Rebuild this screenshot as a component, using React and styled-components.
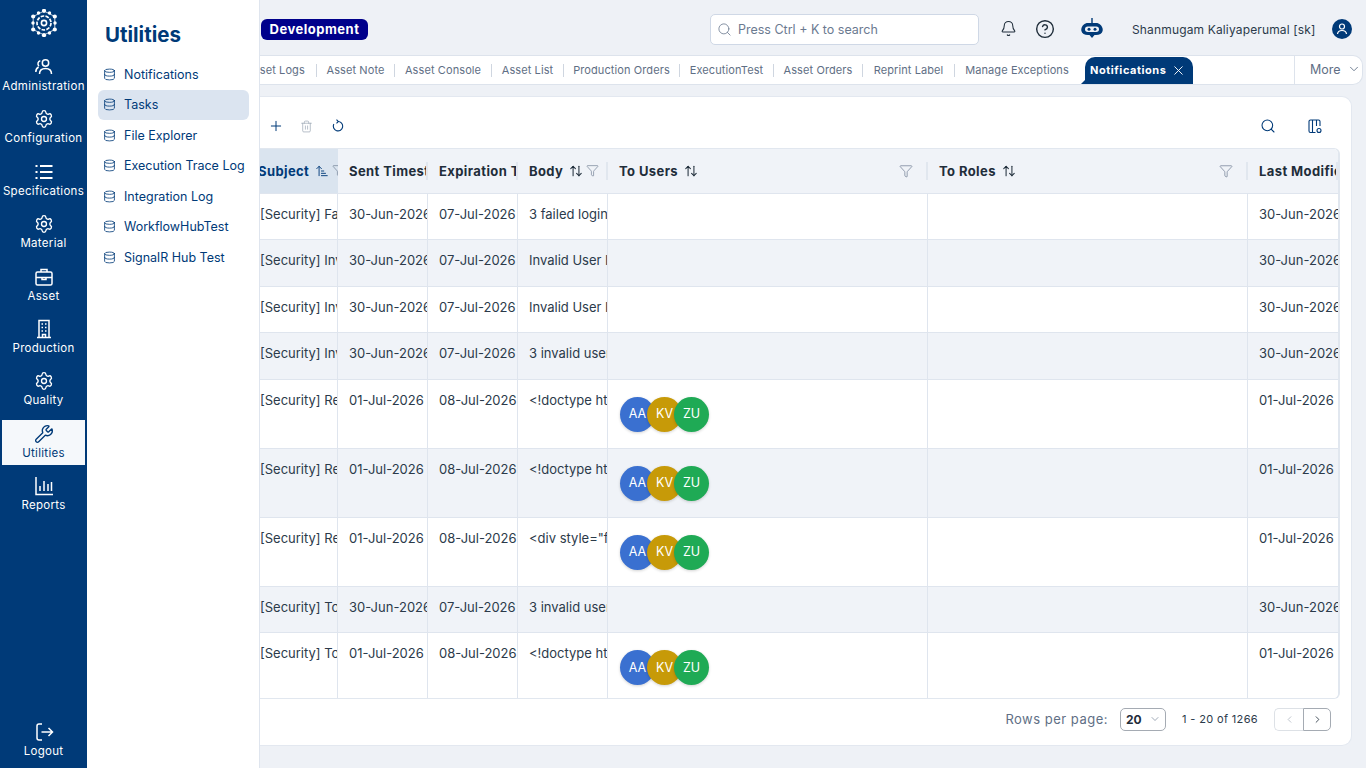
import React from "react";
import styled, { createGlobalStyle } from "styled-components";
import {
  Settings,
  Wrench,
  Database,
  Search,
  Bell,
  CircleHelp,
  X,
  ChevronDown,
  ChevronLeft,
  ChevronRight,
  Plus,
  Trash2,
  ArrowUpDown,
  ArrowUpNarrowWide,
  Funnel,
} from "lucide-react";

const NAVY = "#003a78";

const GlobalStyle = createGlobalStyle`
  html, body {
    margin: 0;
    height: 100%;
    overflow: hidden;
  }
  body {
    font-family: Inter, "Open Sans", sans-serif;
    background-color: #eef1f6;
  }
  * {
    box-sizing: border-box;
  }
`;

const Page = styled.div`
  display: flex;
  width: 1366px;
  height: 768px;
  overflow: hidden;
`;

const Rail = styled.nav`
  width: 87px;
  flex-shrink: 0;
  display: flex;
  flex-direction: column;
  background-color: ${NAVY};
  padding: 0 2px 5px;
`;

const LogoBox = styled.div`
  height: 53px;
  flex-shrink: 0;
  display: flex;
  justify-content: center;
  padding-top: 9px;
`;

const RailList = styled.div`
  flex: 1;
  display: flex;
  flex-direction: column;
  gap: 7.4px;
`;

const RailItem = styled.div`
  height: 45px;
  display: flex;
  flex-direction: column;
  align-items: center;
  padding-top: 4px;
  gap: 2px;
  font-size: 11.5px;
  line-height: 14px;
  letter-spacing: 0.3px;
  white-space: nowrap;
  color: ${(p) => (p.$active ? NAVY : "#ffffff")};
  background-color: ${(p) => (p.$active ? "#f5f8fb" : "transparent")};
`;

const Flyout = styled.aside`
  width: 173px;
  flex-shrink: 0;
  background-color: #ffffff;
  border-right: 1px solid #dfe5ee;
  padding: 0 10px 0 11px;
`;

const FlyoutTitle = styled.h2`
  margin: 0;
  height: 59px;
  padding: 22px 0 0 7px;
  font-size: 20.5px;
  line-height: 26px;
  font-weight: 700;
  color: ${NAVY};
`;

const MenuList = styled.div`
  display: flex;
  flex-direction: column;
  gap: 0.6px;
`;

const MenuItem = styled.div`
  height: 30px;
  display: flex;
  align-items: center;
  gap: 8px;
  padding-left: 5px;
  border-radius: 6px;
  font-size: 12.5px;
  white-space: nowrap;
  color: ${NAVY};
  background-color: ${(p) => (p.$active ? "#dbe4f0" : "transparent")};

  svg {
    flex-shrink: 0;
  }
`;

const Main = styled.main`
  flex: 1;
  min-width: 0;
  display: flex;
  flex-direction: column;
  overflow: hidden;
`;

const TopBar = styled.header`
  height: 55px;
  flex-shrink: 0;
  display: flex;
  align-items: center;
  padding: 3px 14px 0 1px;
`;

const EnvBadge = styled.div`
  width: 107px;
  height: 21px;
  display: flex;
  align-items: center;
  justify-content: center;
  border-radius: 6px;
  background-color: #00008b;
  color: #ffffff;
  font-size: 13px;
  font-weight: 700;
  letter-spacing: 0.5px;
`;

const SearchBox = styled.div`
  width: 269px;
  height: 31px;
  margin-left: 342px;
  display: flex;
  align-items: center;
  gap: 6px;
  padding-left: 6px;
  background-color: #ffffff;
  border: 1px solid #cfd8e6;
  border-radius: 5px;
  font-size: 12.5px;
  color: #6b7a90;

  svg {
    flex-shrink: 0;
  }
`;

const TopIcon = styled.div`
  display: flex;
  margin-left: ${(p) => p.$gap}px;
  margin-top: -1px;
  color: ${(p) => p.$color || "#1f2d3a"};
`;

const UserName = styled.div`
  margin-left: ${(p) => p.$gap}px;
  width: 200px;
  font-size: 12px;
  letter-spacing: 0.15px;
  white-space: nowrap;
  color: #2b3a4a;
`;

const TabBar = styled.div`
  height: 30px;
  flex-shrink: 0;
  margin-right: 3px;
  display: flex;
  background-color: #ffffff;
  border: 1px solid #dde3ec;
  border-left: none;
  border-radius: 0 10px 10px 0;
  overflow: hidden;
`;

const TabStrip = styled.div`
  flex: 1;
  min-width: 0;
  display: flex;
  align-items: center;
  margin-left: -25px;
`;

const Tab = styled.div`
  flex-shrink: 0;
  width: ${(p) => p.$width}px;
  height: 13px;
  display: flex;
  align-items: center;
  justify-content: center;
  font-size: 11px;
  letter-spacing: 0.1px;
  white-space: nowrap;
  color: #5f6f85;
  border-right: ${(p) => (p.$last ? "none" : "1px solid #cfd6e0")};
`;

const ActiveTab = styled.div`
  position: relative;
  flex-shrink: 0;
  width: 108px;
  height: 28px;
  margin: 0 0 -1px 6px;
  padding: 0 0 2px 5px;
  align-self: flex-end;
  display: flex;
  align-items: center;
  gap: 5px;
  background-color: ${NAVY};
  border-radius: 10px 10px 0 0;
  color: #ffffff;
  font-size: 11px;
  font-weight: 700;
  letter-spacing: 0.55px;

  &::before {
    content: "";
    position: absolute;
    left: -5px;
    bottom: 0;
    border-bottom: 5px solid ${NAVY};
    border-left: 5px solid transparent;
  }
`;

const MoreBox = styled.div`
  width: 68px;
  flex-shrink: 0;
  display: flex;
  align-items: center;
  gap: 6px;
  padding: 0 0 2px 15px;
  border-left: 1px solid #dde3ec;
  font-size: 12.5px;
  color: #5f6f85;
`;

const Card = styled.section`
  height: 650px;
  margin: 11px 14px 0 0;
  display: flex;
  flex-direction: column;
  background-color: #ffffff;
  border: 1px solid #e3e8f0;
  border-left: none;
  border-radius: 0 10px 10px 0;
  overflow: hidden;
`;

const Toolbar = styled.div`
  height: 50.5px;
  flex-shrink: 0;
  display: flex;
  align-items: center;
  padding: 8px 13px 0 0;
`;

const ToolButton = styled.button`
  width: ${(p) => p.$width || 31}px;
  display: flex;
  justify-content: center;
  padding: 0;
  background: none;
  border: none;
  color: ${(p) => p.$color || NAVY};
`;

const Spacer = styled.div`
  flex: 1;
`;

const TableWrap = styled.div`
  height: 551px;
  flex-shrink: 0;
  margin-right: 11px;
  border: 1px solid #e1e7ef;
  border-width: 1px 2px 1px 0;
  border-radius: 0 6px 6px 0;
  overflow: hidden;
`;

const HeadRow = styled.div`
  display: grid;
  grid-template-columns: 78px 90px 90px 90px 320px 320px 90px;
  height: 45px;
  background-color: #f0f3f8;
  border-bottom: 1px solid #dfe5ee;
`;

const HeadCell = styled.div`
  position: relative;
  display: flex;
  align-items: center;
  gap: 6px;
  min-width: 0;
  padding-left: ${(p) => (p.$first ? "0" : "11px")};
  overflow: hidden;
  white-space: nowrap;
  font-size: 13px;
  font-weight: 700;
  letter-spacing: 0.4px;
  color: ${(p) => (p.$sorted ? NAVY : "#1f2d3a")};
  background-color: ${(p) => (p.$sorted ? "#dae4ef" : "transparent")};

  svg {
    flex-shrink: 0;
  }

  &::after {
    content: "";
    display: ${(p) => (p.$sorted ? "none" : "block")};
    position: absolute;
    right: 0;
    top: 13px;
    width: 2px;
    height: 18px;
    background-color: #e1e7ef;
  }
`;

const HeadLabel = styled.span`
  flex-shrink: 0;
  margin-left: ${(p) => (p.$pull ? "-2px" : "0")};
`;

const FilterSlot = styled.span`
  display: flex;
  flex-shrink: 0;
  margin-left: ${(p) => (p.$push ? "auto" : "-3px")};
  margin-right: ${(p) => (p.$push ? "15px" : "0")};
  color: #6b7a90;
`;

const Row = styled.div`
  display: grid;
  grid-template-columns: 78px 90px 90px 90px 320px 320px 90px;
  height: ${(p) => (p.$tall ? "69px" : "46.5px")};
  background-color: ${(p) => (p.$shaded ? "#f0f3f8" : "#ffffff")};
  border-bottom: 1px solid #dfe5ee;
`;

const Cell = styled.div`
  min-width: 0;
  padding: 12px 0 0 ${(p) => (p.$first ? "0" : "11px")};
  overflow: hidden;
  white-space: nowrap;
  font-size: 13px;
  line-height: 16px;
  color: #2b3a4a;
  border-right: ${(p) => (p.$last ? "none" : "1px solid #dfe5ee")};
`;

const AvatarGroup = styled.div`
  display: flex;
  padding: 5px 0 0 1px;
`;

const Avatar = styled.div`
  width: 35px;
  height: 35px;
  margin-left: -8px;
  display: flex;
  align-items: center;
  justify-content: center;
  border-radius: 50%;
  background-color: ${(p) => p.$color};
  box-shadow: 0 1px 3px rgba(0, 0, 0, 0.18);
  color: #ffffff;
  font-size: 12.5px;

  &:first-child {
    margin-left: 0;
  }
`;

const Pagination = styled.div`
  flex: 1;
  display: flex;
  align-items: center;
  padding: 0 20px 5px 0;
  justify-content: flex-end;
`;

const RowsLabel = styled.span`
  font-size: 13px;
  letter-spacing: 0.5px;
  color: #5f6f85;
  margin-right: 12px;
`;

const PageSelect = styled.div`
  width: 46px;
  height: 23px;
  display: flex;
  align-items: center;
  justify-content: space-between;
  padding: 0 4px 0 5px;
  border: 1px solid #a5abb3;
  border-radius: 5px;
  font-size: 12px;
  font-weight: 700;
  color: #1f2d3a;
`;

const PageRange = styled.span`
  margin: 0 16px;
  font-size: 11px;
  letter-spacing: 0.35px;
  color: #2b3a4a;
`;

const PageButton = styled.button`
  width: ${(p) => p.$width}px;
  height: 23px;
  display: flex;
  align-items: center;
  justify-content: center;
  padding: 0;
  background: #ffffff;
  border: 1px solid ${(p) => (p.$off ? "#dde1e6" : "#a5abb3")};
  border-radius: ${(p) => (p.$off ? "5px 0 0 5px" : "0 5px 5px 0")};
  border-right-width: ${(p) => (p.$off ? "0" : "1px")};
  color: ${(p) => (p.$off ? "#a8b0bb" : "#1f2d3a")};
`;

function LogoMark() {
  const ring = [
    [14, 1.8], [19.5, 4], [24.8, 7.5], [25, 14], [24.8, 20.5], [19.5, 24],
    [14, 26.2], [8.5, 24], [3.2, 20.5], [3, 14], [3.2, 7.5], [8.5, 4],
  ];
  return (
    <svg width="28" height="28" viewBox="0 0 28 28" fill="none">
      <path d="M14 2L24.800 7.500V20.500L14 26L3.200 20.500V7.500Z" stroke="#fff" strokeWidth="0.8" />
      {ring.map(([x, y], i) => (
        <circle key={i} cx={x} cy={y} r={i % 2 ? 1.7 : 2.1} fill="#fff" />
      ))}
      <circle cx="14" cy="14" r="7" fill={NAVY} stroke="#fff" strokeWidth="1.700" strokeDasharray="3.600 1.300" />
      <circle cx="14" cy="14" r="2.600" stroke="#fff" strokeWidth="1.600" />
    </svg>
  );
}

function RailSvg({ children }) {
  return (
    <svg width="20" height="20" viewBox="0 0 20 20" fill="none" stroke="currentColor" strokeWidth="1.500">
      {children}
    </svg>
  );
}

function AdminIcon() {
  return (
    <RailSvg>
      <circle cx="11.500" cy="6" r="3.200" />
      <path d="M5.500 17c0-3.500 2.500-5.500 6-5.500s6 2 6 5.500" />
      <path d="M6.300 3.800a3 3 0 0 0-1.300 5.200M1.800 15c0-2.500 1-4 2.800-5" />
    </RailSvg>
  );
}

function ListIcon() {
  return (
    <RailSvg>
      <path strokeWidth="1.900" d="M1.500 4h2M6 4h12.500M1.500 10h2M6 10h12.500M1.500 16h2M6 16h12.500" />
    </RailSvg>
  );
}

function BriefcaseIcon() {
  return (
    <RailSvg>
      <rect x="2" y="5" width="16" height="13" rx="1.500" />
      <path d="M7 5V2.500h6V5M2 10.500h16M8 10.500v2h4v-2" />
    </RailSvg>
  );
}

function BuildingIcon() {
  return (
    <RailSvg>
      <path d="M5 18.500V1.500h10v17M3 18.500h14" />
      <path strokeWidth="1.700" d="M7.500 5h1.500M11 5h1.500M7.500 8.500h1.500M11 8.500h1.500M7.500 12h1.500M11 12h1.500" />
      <path d="M8.500 18.500v-3h3v3" />
    </RailSvg>
  );
}

function ReportsIcon() {
  return (
    <RailSvg>
      <path d="M2 1v17.500h17" />
      <path d="M6 15v-5M10 15V5M14 15V8M17.500 15V6" />
    </RailSvg>
  );
}

function LogoutIcon() {
  return (
    <RailSvg>
      <path d="M8 2H5a2 2 0 0 0-2 2v12a2 2 0 0 0 2 2h3M7.500 10H18.500M14.500 6l4 4-4 4" />
    </RailSvg>
  );
}

function BotIcon() {
  return (
    <svg width="22" height="22" viewBox="0 0 22 22">
      <path d="M11 0v5" stroke={NAVY} strokeWidth="1.400" />
      <path
        d="M7 5h8c3.500 0 6 2.500 6.600 5.500.2 1 .2 1.600 0 2.500C21 15.500 18.500 17 15 17h-1.500L11 20l-2.500-3H7c-3.500 0-6-1.500-6.600-4-.2-.9-.2-1.500 0-2.500C1 7.500 3.500 5 7 5z"
        fill={NAVY}
      />
      <rect x="4" y="8.500" width="14" height="5.500" rx="2.750" fill="#eef1f6" />
      <circle cx="8" cy="11.200" r="1.500" fill={NAVY} />
      <circle cx="14" cy="11.200" r="1.500" fill={NAVY} />
    </svg>
  );
}

function UserBadge() {
  return (
    <svg width="20" height="20" viewBox="0 0 20 20" fill="none">
      <circle cx="10" cy="10" r="10" fill={NAVY} />
      <circle cx="10" cy="7.500" r="2.500" stroke="#fff" strokeWidth="1.200" />
      <path d="M5.500 15c.3-2.500 2-3.500 4.500-3.500s4.200 1 4.500 3.500" stroke="#fff" strokeWidth="1.200" />
    </svg>
  );
}

function ColumnsIcon() {
  return (
    <svg width="14" height="15" viewBox="0 0 14 15" fill="none" stroke={NAVY} strokeWidth="1.100">
      <path d="M7.500 13.500H2.500a1.500 1.500 0 0 1-1.500-1.500V2.500A1.500 1.500 0 0 1 2.500 1h8A1.500 1.500 0 0 1 12 2.500V7" />
      <path d="M4.500 1v12.500M8.500 1v6" />
      <circle cx="11" cy="11.500" r="2" />
    </svg>
  );
}

function RefreshIcon() {
  return (
    <svg width="14" height="14" viewBox="0 0 14 14" fill="none" stroke="currentColor" strokeWidth="1.100">
      <path d="M7 2.500a4.700 4.700 0 1 1-4.200 2.600" />
      <path d="M5.500 .7L7.300 2.500 5.500 4.300" />
    </svg>
  );
}

const railItems = [
  { label: "Administration", icon: <AdminIcon /> },
  { label: "Configuration", icon: <Settings size={20} strokeWidth={1.6} /> },
  { label: "Specifications", icon: <ListIcon /> },
  { label: "Material", icon: <Settings size={20} strokeWidth={1.6} /> },
  { label: "Asset", icon: <BriefcaseIcon /> },
  { label: "Production", icon: <BuildingIcon /> },
  { label: "Quality", icon: <Settings size={20} strokeWidth={1.6} /> },
  { label: "Utilities", icon: <Wrench size={20} strokeWidth={1.6} />, active: true },
  { label: "Reports", icon: <ReportsIcon /> },
];

const menuItems = [
  "Notifications",
  "Tasks",
  "File Explorer",
  "Execution Trace Log",
  "Integration Log",
  "WorkflowHubTest",
  "SignalR Hub Test",
];

const tabs = [
  { label: "Asset Logs", width: 82 },
  { label: "Asset Note", width: 78 },
  { label: "Asset Console", width: 97 },
  { label: "Asset List", width: 72 },
  { label: "Production Orders", width: 116 },
  { label: "ExecutionTest", width: 94 },
  { label: "Asset Orders", width: 89 },
  { label: "Reprint Label", width: 92 },
  { label: "Manage Exceptions", width: 124, last: true },
];

const users = [
  { initials: "AA", color: "#3a70d0" },
  { initials: "KV", color: "#c79a08" },
  { initials: "ZU", color: "#1faa55" },
];

const rows = [
  { subject: "[Security] Failed Login", sent: "30-Jun-2026", exp: "07-Jul-2026", body: "3 failed login attempts" },
  { subject: "[Security] Invalid User", sent: "30-Jun-2026", exp: "07-Jul-2026", body: "Invalid User Id" },
  { subject: "[Security] Invalid User", sent: "30-Jun-2026", exp: "07-Jul-2026", body: "Invalid User Id" },
  { subject: "[Security] Invalid User", sent: "30-Jun-2026", exp: "07-Jul-2026", body: "3 invalid user attempts" },
  { subject: "[Security] Reset", sent: "01-Jul-2026", exp: "08-Jul-2026", body: "<!doctype html>", avatars: true },
  { subject: "[Security] Reset", sent: "01-Jul-2026", exp: "08-Jul-2026", body: "<!doctype html>", avatars: true },
  { subject: "[Security] Reset", sent: "01-Jul-2026", exp: "08-Jul-2026", body: '<div style="font', avatars: true },
  { subject: "[Security] Token", sent: "30-Jun-2026", exp: "07-Jul-2026", body: "3 invalid user attempts" },
  { subject: "[Security] Token", sent: "01-Jul-2026", exp: "08-Jul-2026", body: "<!doctype html>", avatars: true },
];

export default function App() {
  return (
    <Page>
      <GlobalStyle />
      <Rail>
        <LogoBox>
          <LogoMark />
        </LogoBox>
        <RailList>
          {railItems.map((item) => (
            <RailItem key={item.label} $active={item.active}>
              {item.icon}
              {item.label}
            </RailItem>
          ))}
        </RailList>
        <RailItem>
          <LogoutIcon />
          Logout
        </RailItem>
      </Rail>

      <Flyout>
        <FlyoutTitle>Utilities</FlyoutTitle>
        <MenuList>
          {menuItems.map((label) => (
            <MenuItem key={label} $active={label === "Tasks"}>
              <Database size={13} strokeWidth={1.5} />
              {label}
            </MenuItem>
          ))}
        </MenuList>
      </Flyout>

      <Main>
        <TopBar>
          <EnvBadge>Development</EnvBadge>
          <SearchBox>
            <Search size={15} strokeWidth={1.3} />
            Press Ctrl + K to search
          </SearchBox>
          <TopIcon $gap={20.5}>
            <Bell size={17} strokeWidth={1.5} />
          </TopIcon>
          <TopIcon $gap={18.5}>
            <CircleHelp size={20} strokeWidth={1.7} />
          </TopIcon>
          <TopIcon $gap={26}>
            <BotIcon />
          </TopIcon>
          <UserName $gap={29}>Shanmugam Kaliyaperumal [sk]</UserName>
          <UserBadge />
        </TopBar>

        <TabBar>
          <TabStrip>
            {tabs.map((tab) => (
              <Tab key={tab.label} $width={tab.width} $last={tab.last}>
                {tab.label}
              </Tab>
            ))}
            <ActiveTab>
              Notifications
              <X size={15} strokeWidth={1.5} />
            </ActiveTab>
          </TabStrip>
          <MoreBox>
            More
            <ChevronDown size={14} strokeWidth={1.5} />
          </MoreBox>
        </TabBar>

        <Card>
          <Toolbar>
            <ToolButton>
              <Plus size={16} strokeWidth={1.5} />
            </ToolButton>
            <ToolButton $color="#9aa5b3">
              <Trash2 size={13} strokeWidth={1.3} />
            </ToolButton>
            <ToolButton>
              <RefreshIcon />
            </ToolButton>
            <Spacer />
            <ToolButton $width={47}>
              <Search size={16} strokeWidth={1.6} />
            </ToolButton>
            <ToolButton $width={47}>
              <ColumnsIcon />
            </ToolButton>
          </Toolbar>

          <TableWrap>
            <HeadRow>
              <HeadCell $first $sorted>
                <HeadLabel $pull>Subject</HeadLabel>
                <ArrowUpNarrowWide size={14} strokeWidth={1.6} />
                <FilterSlot>
                  <Funnel size={13} strokeWidth={1.2} />
                </FilterSlot>
              </HeadCell>
              <HeadCell>Sent Timestamp</HeadCell>
              <HeadCell>Expiration Timestamp</HeadCell>
              <HeadCell>
                <HeadLabel>Body</HeadLabel>
                <ArrowUpDown size={14} strokeWidth={1.75} />
                <FilterSlot>
                  <Funnel size={13} strokeWidth={1.2} />
                </FilterSlot>
              </HeadCell>
              <HeadCell>
                <HeadLabel>To Users</HeadLabel>
                <ArrowUpDown size={14} strokeWidth={1.75} />
                <FilterSlot $push>
                  <Funnel size={14} strokeWidth={1.2} />
                </FilterSlot>
              </HeadCell>
              <HeadCell>
                <HeadLabel>To Roles</HeadLabel>
                <ArrowUpDown size={14} strokeWidth={1.75} />
                <FilterSlot $push>
                  <Funnel size={14} strokeWidth={1.2} />
                </FilterSlot>
              </HeadCell>
              <HeadCell>Last Modified</HeadCell>
            </HeadRow>
            {rows.map((row, index) => (
              <Row key={index} $tall={row.avatars} $shaded={index % 2 === 1}>
                <Cell $first>{row.subject}</Cell>
                <Cell>{row.sent}</Cell>
                <Cell>{row.exp}</Cell>
                <Cell>{row.body}</Cell>
                <Cell>
                  {row.avatars && (
                    <AvatarGroup>
                      {users.map((user) => (
                        <Avatar key={user.initials} $color={user.color}>
                          {user.initials}
                        </Avatar>
                      ))}
                    </AvatarGroup>
                  )}
                </Cell>
                <Cell />
                <Cell $last>{row.sent}</Cell>
              </Row>
            ))}
          </TableWrap>

          <Pagination>
            <RowsLabel>Rows per page:</RowsLabel>
            <PageSelect>
              20
              <ChevronDown size={12} strokeWidth={1.3} color="#6b7a90" />
            </PageSelect>
            <PageRange>1 - 20 of 1266</PageRange>
            <PageButton $width={29} $off>
              <ChevronLeft size={11} strokeWidth={1.6} />
            </PageButton>
            <PageButton $width={28}>
              <ChevronRight size={11} strokeWidth={1.8} />
            </PageButton>
          </Pagination>
        </Card>
      </Main>
    </Page>
  );
}
